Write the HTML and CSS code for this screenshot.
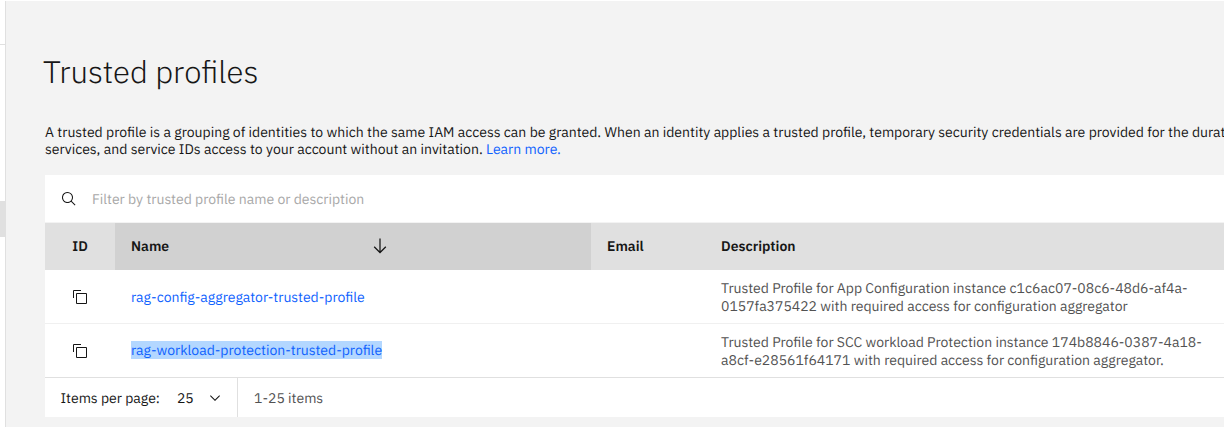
FILE: index.html
```html
<!DOCTYPE html>
<html lang="en">
<head>
<meta charset="utf-8">
<title>Trusted profiles</title>
<link rel="stylesheet" href="styles.css">
</head>
<body>
<div class="shell">
  <nav class="rail"><div class="rail-top"></div><div class="rail-active"></div></nav>
  <main class="page">
    <h1 class="title">Trusted profiles</h1>
    <p class="intro">A trusted profile is a grouping of identities to which the same IAM access can be granted. When an identity applies a trusted profile, temporary security credentials are provided for the durat<br>services, and service IDs access to your account without an invitation. <a class="link" href="#">Learn more.</a></p>
    <section class="table">
      <div class="search">
        <svg class="icon" viewBox="0 0 32 32"><path d="M29 27.586l-7.552-7.552a11.018 11.018 0 1 0-1.414 1.414L27.586 29zM4 13a9 9 0 1 1 9 9 9.01 9.01 0 0 1-9-9z"/></svg>
        <span class="placeholder">Filter by trusted profile name or description</span>
      </div>
      <div class="row head">
        <div class="cell center">ID</div>
        <div class="cell sorted">Name<svg class="sort" viewBox="0 0 32 32"><path d="M24.59 16.59L17 24.17V4h-2v20.17l-7.59-7.58L6 18l10 10 10-10z"/></svg></div>
        <div class="cell">Email</div>
        <div class="cell">Description</div>
      </div>
      <div class="row body">
        <div class="cell center"><svg class="icon" viewBox="0 0 32 32"><path d="M28 10v18H10V10h18m0-2H10a2 2 0 0 0-2 2v18a2 2 0 0 0 2 2h18a2 2 0 0 0 2-2V10a2 2 0 0 0-2-2z"/><path d="M4 18H2V4a2 2 0 0 1 2-2h14v2H4z"/></svg></div>
        <div class="cell"><a class="link" href="#">rag-config-aggregator-trusted-profile</a></div>
        <div class="cell"></div>
        <div class="cell desc"><p>Trusted Profile for App Configuration instance c1c6ac07-08c6-48d6-af4a-<br>0157fa375422 with required access for configuration aggregator</p></div>
      </div>
      <div class="row body last">
        <div class="cell center"><svg class="icon" viewBox="0 0 32 32"><path d="M28 10v18H10V10h18m0-2H10a2 2 0 0 0-2 2v18a2 2 0 0 0 2 2h18a2 2 0 0 0 2-2V10a2 2 0 0 0-2-2z"/><path d="M4 18H2V4a2 2 0 0 1 2-2h14v2H4z"/></svg></div>
        <div class="cell name"><a class="link selected" href="#">rag-workload-protection-trusted-profile</a></div>
        <div class="cell"></div>
        <div class="cell desc"><p>Trusted Profile for SCC workload Protection instance 174b8846-0387-4a18-<br>a8cf-e28561f64171 with required access for configuration aggregator.</p></div>
      </div>
      <div class="pagination">
        <div class="per-page"><span>Items per page:</span><span class="per-value">25</span><svg class="icon" viewBox="0 0 16 16"><path d="M8 11L3 6l.7-.7L8 9.6l4.3-4.3.7.7z"/></svg></div>
        <div class="range">1-25 items</div>
      </div>
    </section>
  </main>
</div>
</body>
</html>
```
FILE: styles.css
```css
* { box-sizing: border-box; }
body { margin: 0; background: #fff; color: #161616; font: 14px/18px "IBM Plex Sans", Roboto, sans-serif; text-rendering: geometricPrecision; overflow: hidden; }
p, h1 { margin: 0; }
svg { display: block; flex: none; fill: #161616; }
.shell { display: flex; height: 428px; padding: 1px 0; }
.rail { width: 6px; flex: none; border-right: 1px solid #e0e0e0; }
.rail-top { height: 44px; border-bottom: 1px solid #e0e0e0; }
.rail-active { height: 36px; margin-top: 156px; background: #e0e0e0; }
.page { flex: 1; min-width: 0; overflow: hidden; background: #f3f3f3; padding: 51px 0 0 39px; }
.title { font-size: 31.2px; line-height: 40px; font-weight: 300; margin-left: -2px; white-space: nowrap; }
.intro { margin-top: 32px; line-height: 17px; white-space: nowrap; word-spacing: 0.05px; }
.link { color: #0f62fe; text-decoration: none; }
.table { margin-top: 17px; background: #fff; white-space: nowrap; }
.search { display: flex; align-items: center; gap: 16px; height: 48px; padding-left: 16px; border-bottom: 1px solid #f3f3f3; }
.icon { width: 16px; height: 16px; }
.placeholder { color: #a8a8a8; padding-top: 1px; margin-left: -1px; }
.row { display: grid; grid-template-columns: 70px 476px 114px 1fr; }
.cell { display: flex; align-items: center; padding-left: 16px; min-width: 0; }
.center { justify-content: center; padding: 0; }
.head { height: 47px; background: #e0e0e0; font-weight: 600; }
.head .cell { padding-bottom: 1px; }
.sorted { justify-content: space-between; padding-right: 201px; background: #d1d1d1; }
.sort { width: 20px; height: 20px; }
.body { height: 54px; border-bottom: 1px solid #f0f0f0; }
.last { border-color: #e0e0e0; }
.name { padding-bottom: 1px; }
.desc { color: #525252; }
.selected { background: #b3d7ff; }
.pagination { display: flex; height: 39px; }
.per-page { display: flex; align-items: center; width: 193px; padding: 1px 0 0 15.5px; border-right: 1px solid #e0e0e0; }
.per-value { margin: 0 13px 0 17px; }
.range { display: flex; align-items: center; padding: 1px 0 0 16px; color: #525252; }
```
